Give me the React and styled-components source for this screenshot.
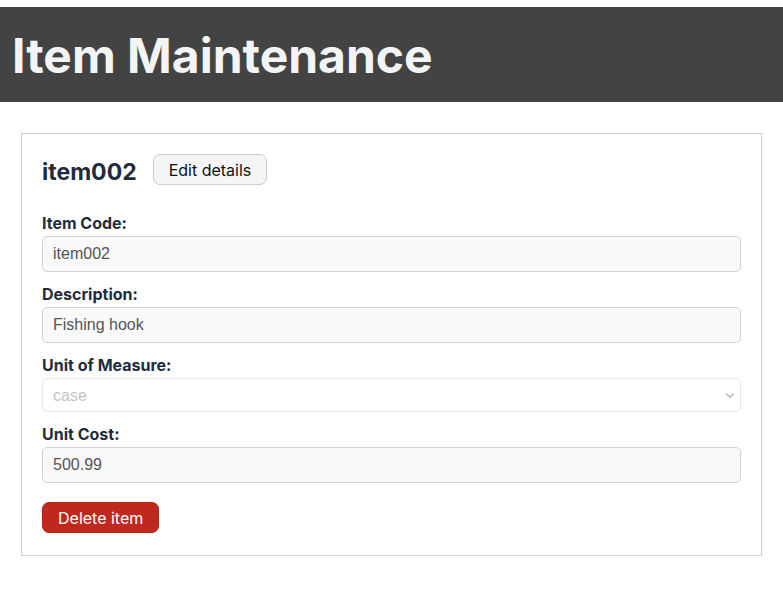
import React from "react";
import styled, { createGlobalStyle } from "styled-components";

const Global = createGlobalStyle`
  html, body { margin: 0; padding: 0; background: #fff; }
  body { font-family: Inter, "Noto Sans", sans-serif; padding-top: 7px; }
  * { box-sizing: border-box; }
`;

const Header = styled.header`
  background: #434343;
  height: 95px;
  display: flex;
  align-items: center;
  padding: 0 12px;
`;

const Title = styled.h1`
  margin: 0;
  color: #f3f4f6;
  font-family: Inter, sans-serif;
  font-weight: 700;
  font-size: 48px;
  line-height: 1;
  padding-top: 2px;
`;

const Main = styled.main`
  padding: 31px 21px;
`;

const Card = styled.section`
  border: 1px solid #cfcfcf;
  padding: 20px 20px 22px;
  display: flex;
  flex-direction: column;
`;

const HeadRow = styled.div`
  display: flex;
  align-items: center;
  gap: 16px;
  height: 31px;
  margin-bottom: 27px;
`;

const ItemName = styled.h2`
  margin: 0;
  font-size: 23px;
  font-weight: 700;
  color: #1f2c3d;
  line-height: 1;
  padding-top: 5px;
`;

const Button = styled.button`
  font-family: Inter, sans-serif;
  font-size: 16px;
  height: 31px;
  padding: 0 15px;
  border-radius: 7px;
  cursor: pointer;
  border: 1px solid ${(p) => (p.$danger ? "#b3261c" : "#cdcdcd")};
  background: ${(p) => (p.$danger ? "#c0281e" : "#f5f5f5")};
  color: ${(p) => (p.$danger ? "#ffffff" : "#111111")};
`;

const Field = styled.div`
  display: flex;
  flex-direction: column;
  margin-bottom: 11px;
`;

const Label = styled.label`
  font-size: 16px;
  font-weight: 700;
  color: #1f2c3d;
  line-height: 20px;
  padding-top: 1px;
  margin-bottom: 3px;
`;

const Input = styled.input`
  height: 36px;
  width: 100%;
  border: 1px solid #d2d2d2;
  border-radius: 5px;
  background: #f9f9f9;
  padding: 0 10px;
  font-family: "Liberation Sans", Arial, sans-serif;
  font-size: 16px;
  color: #555555;
  outline: none;
`;

const Select = styled.select`
  height: 34px;
  width: 100%;
  border: 1px solid #dedede;
  border-radius: 5px;
  background: #ffffff;
  padding: 0 10px;
  font-family: "Liberation Sans", Arial, sans-serif;
  font-size: 16px;
  color: #aaaaaa;
  appearance: none;
  background-image: url("data:image/svg+xml;utf8,<svg xmlns='http://www.w3.org/2000/svg' width='12' height='8' viewBox='0 0 12 8'><path d='M1.5 1.5 L6 6 L10.5 1.5' fill='none' stroke='%23999999' stroke-width='1.8'/></svg>");
  background-repeat: no-repeat;
  background-position: right 5px center;
  background-size: 10px 7px;
`;

const Actions = styled.div`
  margin-top: 8px;
`;

export default function App() {
  return (
    <>
      <Global />
      <Header>
        <Title>Item Maintenance</Title>
      </Header>
      <Main>
        <Card>
          <HeadRow>
            <ItemName>item002</ItemName>
            <Button>Edit details</Button>
          </HeadRow>
          <Field>
            <Label>Item Code:</Label>
            <Input readOnly value="item002" />
          </Field>
          <Field>
            <Label>Description:</Label>
            <Input readOnly value="Fishing hook" />
          </Field>
          <Field>
            <Label>Unit of Measure:</Label>
            <Select disabled value="case" onChange={() => {}}>
              <option value="case">case</option>
            </Select>
          </Field>
          <Field>
            <Label>Unit Cost:</Label>
            <Input readOnly value="500.99" />
          </Field>
          <Actions>
            <Button $danger>Delete item</Button>
          </Actions>
        </Card>
      </Main>
    </>
  );
}
